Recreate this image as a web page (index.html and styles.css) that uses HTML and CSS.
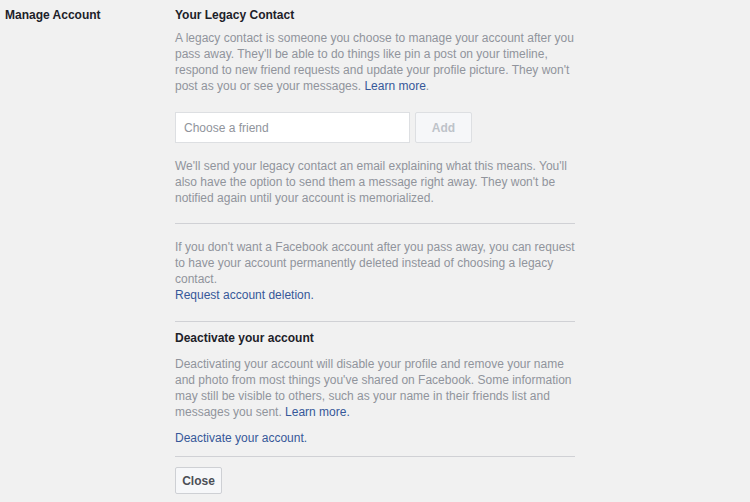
FILE: index.html
```html
<!DOCTYPE html>
<html>
<head>
<meta charset="utf-8">
<link rel="stylesheet" href="styles.css">
</head>
<body>
<div class="row">
  <div class="label">Manage Account</div>
  <div class="content">
    <h3 class="title">Your Legacy Contact</h3>
    <p class="desc">A legacy contact is someone you choose to manage your account after you pass away. They'll be able to do things like pin a post on your timeline, respond to new friend requests and update your profile picture. They won't post as you or see your messages. <a href="#" class="link">Learn more</a>.</p>
    <div class="picker">
      <input class="friend" type="text" placeholder="Choose a friend">
      <button class="btn add" disabled>Add</button>
    </div>
    <p class="desc note">We'll send your legacy contact an email explaining what this means. You'll also have the option to send them a message right away. They won't be notified again until your account is memorialized.</p>
    <div class="sep"></div>
    <p class="desc del">If you don't want a Facebook account after you pass away, you can request to have your account permanently deleted instead of choosing a legacy contact.<br><a href="#" class="link">Request account deletion.</a></p>
    <div class="sep sep2"></div>
    <h3 class="title">Deactivate your account</h3>
    <p class="desc deact-text">Deactivating your account will disable your profile and remove your name and photo from most things you've shared on Facebook. Some information may still be visible to others, such as your name in their friends list and messages you sent. <a href="#" class="link">Learn more.</a></p>
    <p class="desc deact"><a href="#" class="link">Deactivate your account.</a></p>
    <div class="sep sep3"></div>
    <button class="btn close">Close</button>
  </div>
</div>
</body>
</html>
```

FILE: styles.css
```css
html, body {
  margin: 0;
  padding: 0;
  background: #f1f1f1;
}
body {
  font-family: "Liberation Sans", Arial, Helvetica, sans-serif;
  font-size: 12px;
  line-height: 16px;
  color: #1d2129;
}
.row {
  display: flex;
  padding-top: 7px;
}
.label {
  width: 170px;
  padding-left: 5px;
  font-weight: bold;
  color: #1d2129;
}
.content {
  width: 400px;
}
.title {
  margin: 0 0 7px;
  font-size: 12px;
  line-height: 16px;
  font-weight: bold;
  color: #1d2129;
}
.desc {
  margin: 0;
  color: #90949c;
}
.link {
  color: #365899;
  text-decoration: none;
}
.picker {
  display: flex;
  gap: 5px;
  margin-top: 18px;
}
.friend {
  box-sizing: border-box;
  width: 235px;
  height: 31px;
  margin: 0;
  padding: 0 8px;
  border: 1px solid #dddfe2;
  background: #fff;
  font-family: inherit;
  font-size: 12px;
  color: #1d2129;
  outline: none;
}
.friend::placeholder {
  color: #90949c;
}
.btn {
  box-sizing: border-box;
  margin: 0;
  font-family: inherit;
  font-size: 12px;
  font-weight: bold;
  border: 1px solid #ced0d4;
  border-radius: 2px;
  background: #f6f7f9;
  color: #4b4f56;
}
.add {
  width: 57px;
  height: 31px;
  color: #bec3c9;
  border-color: #dddfe2;
}
.note {
  margin-top: 15px;
}
.sep {
  height: 1px;
  background: #d0d1d5;
  margin: 17px 0 15px;
}
.sep2 {
  margin: 18px 0 8px;
}
.deact-text {
  margin-top: 10px;
}
.deact {
  margin-top: 10px;
}
.sep3 {
  margin: 10px 0 10px;
}
.close {
  width: 47px;
  height: 27px;
  padding: 0;
}
```
